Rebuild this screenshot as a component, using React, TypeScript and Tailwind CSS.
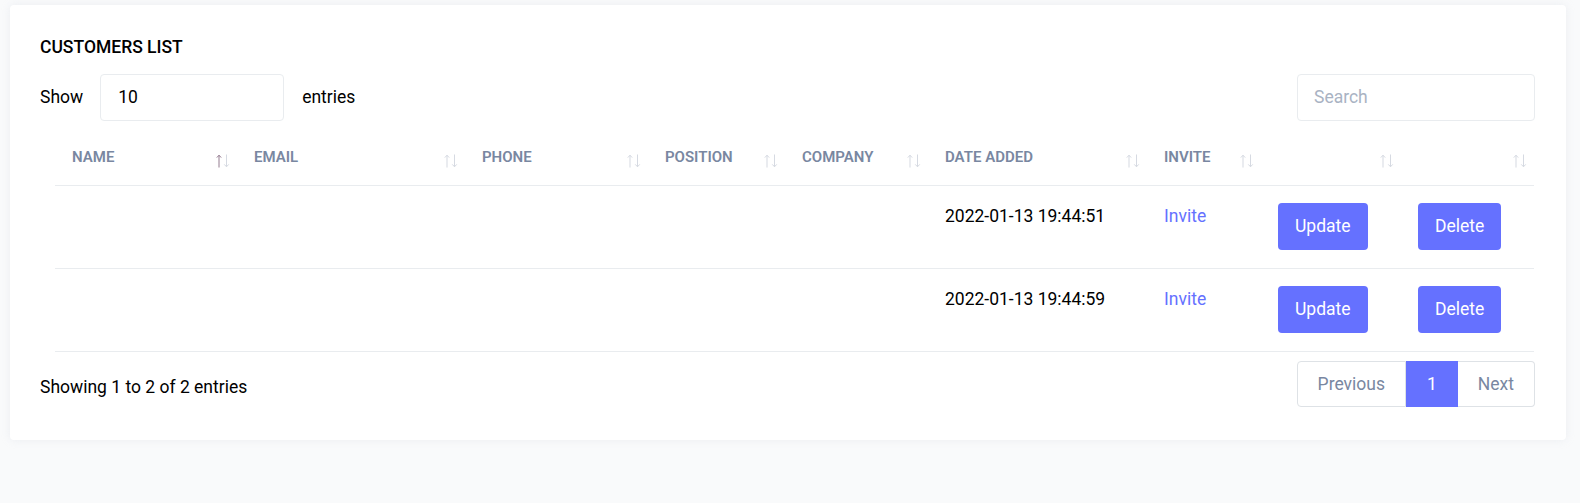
import React from "react";

const cols = [
  { label: "NAME", w: 182, active: true },
  { label: "EMAIL", w: 228 },
  { label: "PHONE", w: 183 },
  { label: "POSITION", w: 137 },
  { label: "COMPANY", w: 143 },
  { label: "DATE ADDED", w: 219 },
  { label: "INVITE", w: 114 },
  { label: "", w: 140 },
  { label: "", w: 133 },
];

function SortIcon({ active }: { active?: boolean }) {
  return (
    <svg width="14" height="14" viewBox="0 0 14 14" fill="none" className="block">
      <g stroke={active ? "#8a6f86" : "#7987a1"} strokeWidth="1" opacity={active ? 0.9 : 0.3}>
        <path d="M3 1.2V13.5" />
        <path d="M0.8 3.6L3 1.2L5.2 3.6" />
      </g>
      <g stroke="#7987a1" strokeWidth="1" opacity={0.3}>
        <path d="M10.5 0.5V12.8" />
        <path d="M8.3 10.4L10.5 12.8L12.7 10.4" />
      </g>
    </svg>
  );
}

const rows = ["2022-01-13 19:44:51", "2022-01-13 19:44:59"];

export default function App() {
  return (
    <div className="min-h-[503px] bg-[#f9fafb] pt-[5px] font-['Roboto',sans-serif] text-black">
      <div className="ml-[10px] mr-[14px] rounded-[4px] bg-white pl-[30px] pr-[31px] pt-[30px] pb-[33px] shadow-[0_0_10px_0_rgba(183,192,206,0.2)]">
        <h6 className="text-[17.5px] font-medium leading-[25px]">CUSTOMERS LIST</h6>

        <div className="mt-[14px] flex items-center justify-between">
          <div className="flex items-center text-[17.5px]">
            <span>Show</span>
            <div className="ml-[17px] flex h-[47px] w-[184px] items-center rounded-[4px] border border-[#e9ecef] pl-[17px]">
              10
            </div>
            <span className="ml-[18px]">entries</span>
          </div>
          <div className="flex h-[47px] w-[238px] items-center rounded-[4px] border border-[#e9ecef] pl-[16px] text-[17.5px] text-[#a9b3c3]">
            Search
          </div>
        </div>

        <div className="ml-[15px] mt-[8px]">
          <table className="w-[1479px] table-fixed border-collapse">
            <colgroup>
              {cols.map((c, i) => (
                <col key={i} style={{ width: c.w }} />
              ))}
            </colgroup>
            <thead>
              <tr className="border-b border-[#e9ecef]">
                {cols.map((c, i) => (
                  <th
                    key={i}
                    className="relative px-[17px] py-[17px] text-left align-top text-[15px] font-semibold leading-[22px] text-[#7987a1]"
                  >
                    {c.label}
                    <span className="absolute bottom-[17px] right-[7px]">
                      <SortIcon active={c.active} />
                    </span>
                  </th>
                ))}
              </tr>
            </thead>
            <tbody>
              {rows.map((d, i) => (
                <tr key={i} className="border-b border-[#e9ecef]">
                  <td className="px-[17px] pt-[17px] pb-[18px]" />
                  <td className="px-[17px] pt-[17px] pb-[18px]" />
                  <td className="px-[17px] pt-[17px] pb-[18px]" />
                  <td className="px-[17px] pt-[17px] pb-[18px]" />
                  <td className="px-[17px] pt-[17px] pb-[18px]" />
                  <td className="px-[17px] pt-[17px] pb-[18px] align-top text-[17.5px] leading-[26px]">{d}</td>
                  <td className="px-[17px] pt-[17px] pb-[18px] align-top text-[17.5px] leading-[26px] text-[#6571ff]">
                    Invite
                  </td>
                  <td className="px-[17px] pt-[17px] pb-[18px] align-top">
                    <button className="h-[47px] rounded-[4px] bg-[#6571ff] px-[17px] text-[17.5px] text-white">
                      Update
                    </button>
                  </td>
                  <td className="px-[17px] pt-[17px] pb-[18px] align-top">
                    <button className="h-[47px] rounded-[4px] bg-[#6571ff] px-[17px] text-[17.5px] text-white">
                      Delete
                    </button>
                  </td>
                </tr>
              ))}
            </tbody>
          </table>
        </div>

        <div className="mt-[9px] flex items-start justify-between">
          <div className="pt-[13px] text-[17.5px] leading-[26px]">Showing 1 to 2 of 2 entries</div>
          <div className="flex h-[46px] text-[17.5px]">
            <div className="flex items-center rounded-l-[4px] border border-[#dee2e6] px-[20px] text-[#7987a1]">
              Previous
            </div>
            <div className="flex items-center border border-[#6571ff] bg-[#6571ff] px-[20px] text-white">
              1
            </div>
            <div className="flex items-center rounded-r-[4px] border border-l-0 border-[#dee2e6] px-[20px] text-[#7987a1]">
              Next
            </div>
          </div>
        </div>
      </div>
    </div>
  );
}
